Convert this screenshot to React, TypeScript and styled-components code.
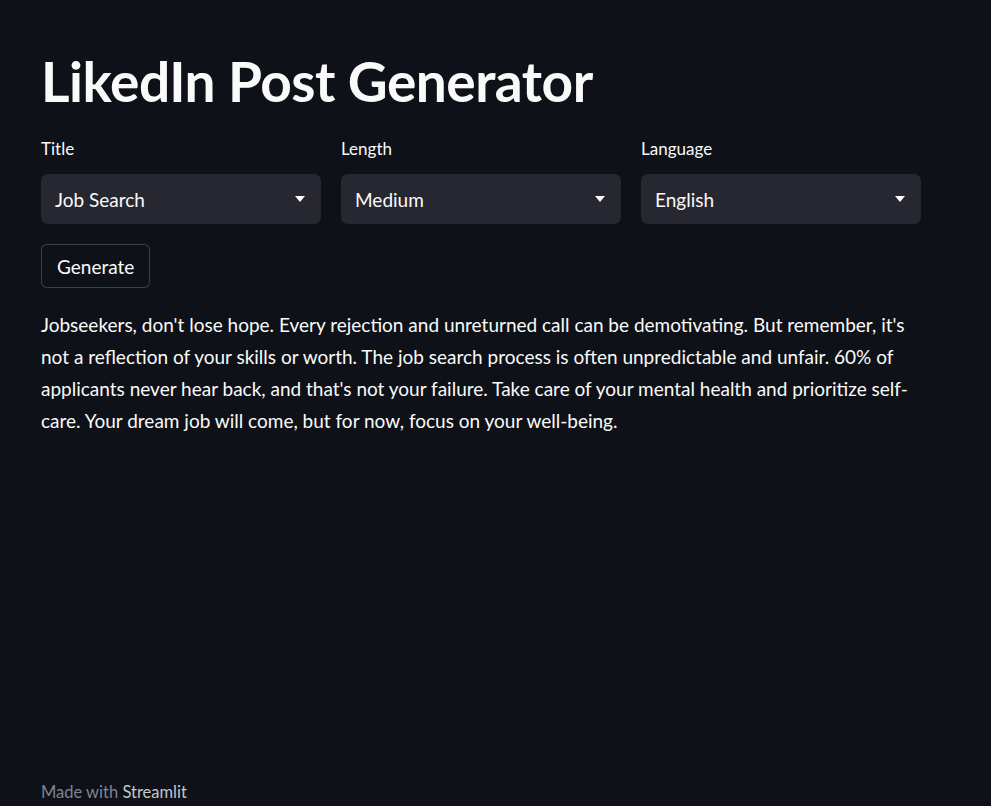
import React from "react";
import styled, { createGlobalStyle } from "styled-components";

const Global = createGlobalStyle`
  html, body { margin: 0; padding: 0; background: #0e1117; }
  body { font-family: Lato, "Noto Sans", sans-serif; color: #fafafa; }
  * { box-sizing: border-box; }
`;

const Page = styled.div`
  min-height: 806px;
  display: flex;
  flex-direction: column;
  background: #0e1117;
`;

const Main = styled.main`
  flex: 1;
  width: 921px;
  padding: 48px 0 0 41px;
`;

const Title = styled.h1`
  margin: 0 0 24px 0;
  font-family: Lato, "Noto Sans", sans-serif;
  font-weight: 700;
  font-size: 55px;
  line-height: 1.2;
  color: #fafafa;
  letter-spacing: -0.5px;
`;

const Row = styled.div`
  display: grid;
  grid-template-columns: repeat(3, 280px);
  column-gap: 20px;
`;

const Field = styled.div`
  display: flex;
  flex-direction: column;
`;

const Label = styled.label`
  font-size: 17px;
  line-height: 22px;
  color: #fafafa;
  margin-bottom: 14px;
`;

const Select = styled.div`
  height: 50px;
  background: #262730;
  border-radius: 7px;
  display: flex;
  align-items: center;
  justify-content: space-between;
  padding: 0 16px 0 14px;
  font-size: 19px;
  color: #fafafa;
`;

const Caret = styled.svg`
  width: 10px;
  height: 6px;
  fill: #fafafa;
`;

const Button = styled.button`
  margin-top: 20px;
  height: 44px;
  padding: 0 15px;
  background: #0e1117;
  border: 1px solid rgba(250, 250, 250, 0.2);
  border-radius: 6px;
  color: #fafafa;
  font-family: Lato, "Noto Sans", sans-serif;
  font-size: 19px;
  cursor: pointer;
`;

const Text = styled.p`
  margin: 21px 0 0 0;
  font-size: 19px;
  line-height: 32px;
  color: #fafafa;
`;

const Footer = styled.footer`
  padding: 0 0 0 41px;
  height: 24px;
  font-size: 16.5px;
  color: #808495;
`;

const Brand = styled.span`
  color: #c4c6ce;
`;

function Dropdown({ label, value }: { label: string; value: string }) {
  return (
    <Field>
      <Label>{label}</Label>
      <Select>
        <span>{value}</span>
        <Caret viewBox="0 0 10 6">
          <path d="M0 0 L10 0 L5 6 Z" />
        </Caret>
      </Select>
    </Field>
  );
}

export default function App() {
  return (
    <Page>
      <Global />
      <Main>
        <Title>LikedIn Post Generator</Title>
        <Row>
          <Dropdown label="Title" value="Job Search" />
          <Dropdown label="Length" value="Medium" />
          <Dropdown label="Language" value="English" />
        </Row>
        <Button>Generate</Button>
        <Text>
          Jobseekers, don't lose hope. Every rejection and unreturned call can be demotivating. But remember, it's not a
          reflection of your skills or worth. The job search process is often unpredictable and unfair. 60% of applicants
          never hear back, and that's not your failure. Take care of your mental health and prioritize self-care. Your
          dream job will come, but for now, focus on your well-being.
        </Text>
      </Main>
      <Footer>
        Made with <Brand>Streamlit</Brand>
      </Footer>
    </Page>
  );
}
